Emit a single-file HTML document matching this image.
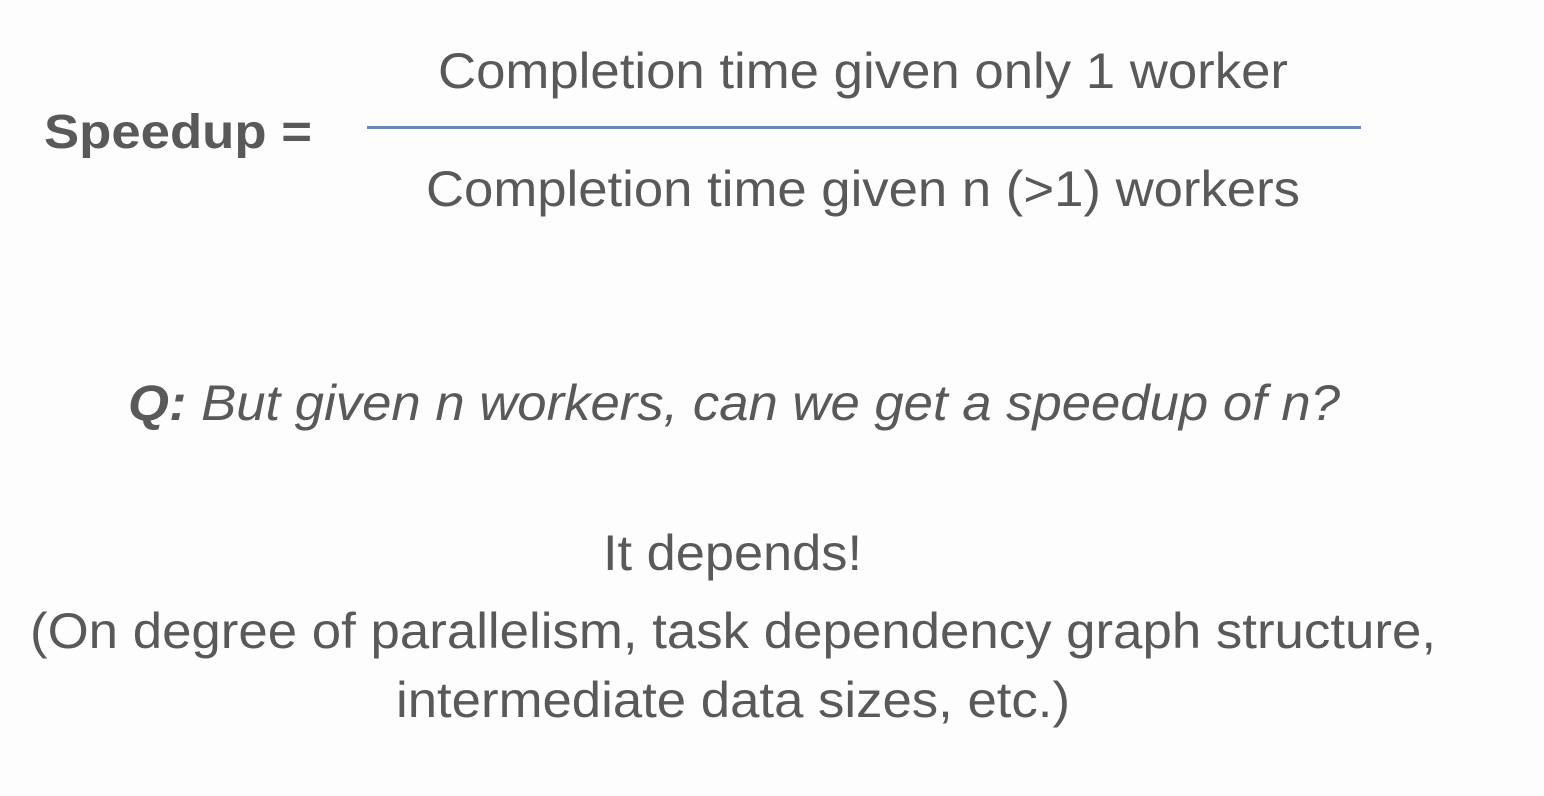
<!DOCTYPE html>
<html><head><meta charset="utf-8"><style>
html,body{margin:0;padding:0;background:#fdfdfd;}
svg{display:block}
text{font-family:"Liberation Sans",Arial,sans-serif;fill:#595959;}
</style></head><body>
<svg width="1544" height="796" viewBox="0 0 1544 796" xmlns="http://www.w3.org/2000/svg">
<rect width="1544" height="796" fill="#fdfdfd"/>
<text x="438" y="88" font-size="50" textLength="850" lengthAdjust="spacingAndGlyphs">Completion time given only 1 worker</text>
<text x="44" y="148" font-size="48" font-weight="bold" textLength="268" lengthAdjust="spacingAndGlyphs">Speedup =</text>
<rect x="367" y="126" width="994" height="3" fill="#6b87b9"/>
<text x="426" y="206" font-size="50" textLength="874" lengthAdjust="spacingAndGlyphs">Completion time given n (&gt;1) workers</text>
<text x="128" y="420" font-size="50" font-style="italic" textLength="1212" lengthAdjust="spacingAndGlyphs"><tspan font-weight="bold">Q:</tspan> But given n workers, can we get a speedup of n?</text>
<text x="603" y="570" font-size="50" textLength="259" lengthAdjust="spacingAndGlyphs">It depends!</text>
<text x="30" y="648" font-size="50" textLength="1406" lengthAdjust="spacingAndGlyphs">(On degree of parallelism, task dependency graph structure,</text>
<text x="396" y="717" font-size="50" textLength="674" lengthAdjust="spacingAndGlyphs">intermediate data sizes, etc.)</text>
</svg>
</body></html>
